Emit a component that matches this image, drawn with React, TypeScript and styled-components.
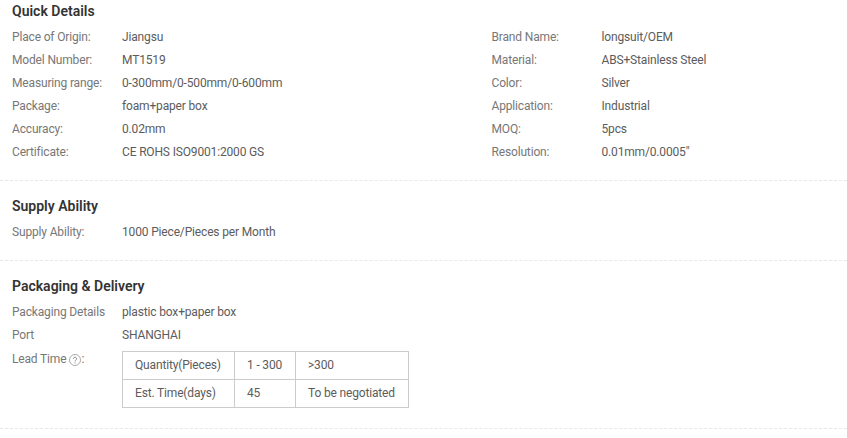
import React from "react";
import styled, { createGlobalStyle } from "styled-components";

const GlobalStyle = createGlobalStyle`
  html, body {
    margin: 0;
    padding: 0;
    background: #fff;
    font-family: Roboto, "Liberation Sans", sans-serif;
  }
`;

const Page = styled.div`
  width: 847px;
  height: 438px;
  overflow: hidden;
  box-sizing: border-box;
  padding-top: 1px;
`;

const Section = styled.section<{ $height: number; $top?: number }>`
  height: ${(p) => p.$height}px;
  box-sizing: border-box;
  padding: ${(p) => p.$top ?? 0}px 0 0 12px;
  border-bottom: 1px dashed #e8e8e8;
`;

const Title = styled.h3`
  margin: 0 0 5px;
  font-size: 14px;
  line-height: 20px;
  font-weight: 600;
  color: #333;
`;

const Columns = styled.div`
  display: grid;
  grid-template-columns: 479.5px 1fr;
`;

const Row = styled.div`
  display: flex;
  min-height: 23px;
  font-size: 12px;
  line-height: 23px;
  letter-spacing: -0.16px;
`;

const Label = styled.span`
  width: 110px;
  flex: none;
  color: #777;
  white-space: nowrap;
`;

const LeadLabel = styled(Label)`
  padding-top: 1px;
`;

const Value = styled.span`
  color: #5c5c5c;
  white-space: nowrap;
`;

const HelpIcon = styled.svg`
  width: 12px;
  height: 12px;
  margin: 0 0 0 3px;
  vertical-align: -3px;
`;

const LeadTable = styled.table`
  border-collapse: collapse;
  table-layout: fixed;
  width: 287px;
  font-size: 12px;
  color: #5c5c5c;
  margin-top: 4px;

  td {
    box-sizing: border-box;
    height: 28px;
    padding: 0 0 0 12px;
    border: 1px solid #ccc;
    white-space: nowrap;
  }

  td:nth-child(1) {
    width: 112px;
  }

  td:nth-child(2) {
    width: 61px;
  }
`;

const left = [
  ["Place of Origin:", "Jiangsu"],
  ["Model Number:", "MT1519"],
  ["Measuring range:", "0-300mm/0-500mm/0-600mm"],
  ["Package:", "foam+paper box"],
  ["Accuracy:", "0.02mm"],
  ["Certificate:", "CE ROHS ISO9001:2000 GS"],
];

const right = [
  ["Brand Name:", "longsuit/OEM"],
  ["Material:", "ABS+Stainless Steel"],
  ["Color:", "Silver"],
  ["Application:", "Industrial"],
  ["MOQ:", "5pcs"],
  ["Resolution:", '0.01mm/0.0005"'],
];

const Detail = ({ label, value }: { label: string; value: string }) => (
  <Row>
    <Label>{label}</Label>
    <Value>{value}</Value>
  </Row>
);

export default function App() {
  return (
    <Page>
      <GlobalStyle />
      <Section $height={180}>
        <Title>Quick Details</Title>
        <Columns>
          <div>
            {left.map(([l, v]) => (
              <Detail key={l} label={l} value={v} />
            ))}
          </div>
          <div>
            {right.map(([l, v]) => (
              <Detail key={l} label={l} value={v} />
            ))}
          </div>
        </Columns>
      </Section>
      <Section $height={80} $top={15}>
        <Title>Supply Ability</Title>
        <Detail label="Supply Ability:" value="1000 Piece/Pieces per Month" />
      </Section>
      <Section $height={168} $top={15}>
        <Title>Packaging &amp; Delivery</Title>
        <Detail label="Packaging Details" value="plastic box+paper box" />
        <Detail label="Port" value="SHANGHAI" />
        <Row>
          <LeadLabel>
            Lead Time
            <HelpIcon viewBox="0 0 12 12" fill="none" stroke="#aaa">
              <circle cx="6" cy="6" r="5.5" />
              <path d="M4.4 4.8a1.6 1.6 0 1 1 2.5 1.3c-.6.4-.9.7-.9 1.3M6 8.4v1" stroke="#888" />
            </HelpIcon>
            :
          </LeadLabel>
          <LeadTable>
            <tbody>
              <tr>
                <td>Quantity(Pieces)</td>
                <td>1 - 300</td>
                <td>&gt;300</td>
              </tr>
              <tr>
                <td>Est. Time(days)</td>
                <td>45</td>
                <td>To be negotiated</td>
              </tr>
            </tbody>
          </LeadTable>
        </Row>
      </Section>
    </Page>
  );
}
